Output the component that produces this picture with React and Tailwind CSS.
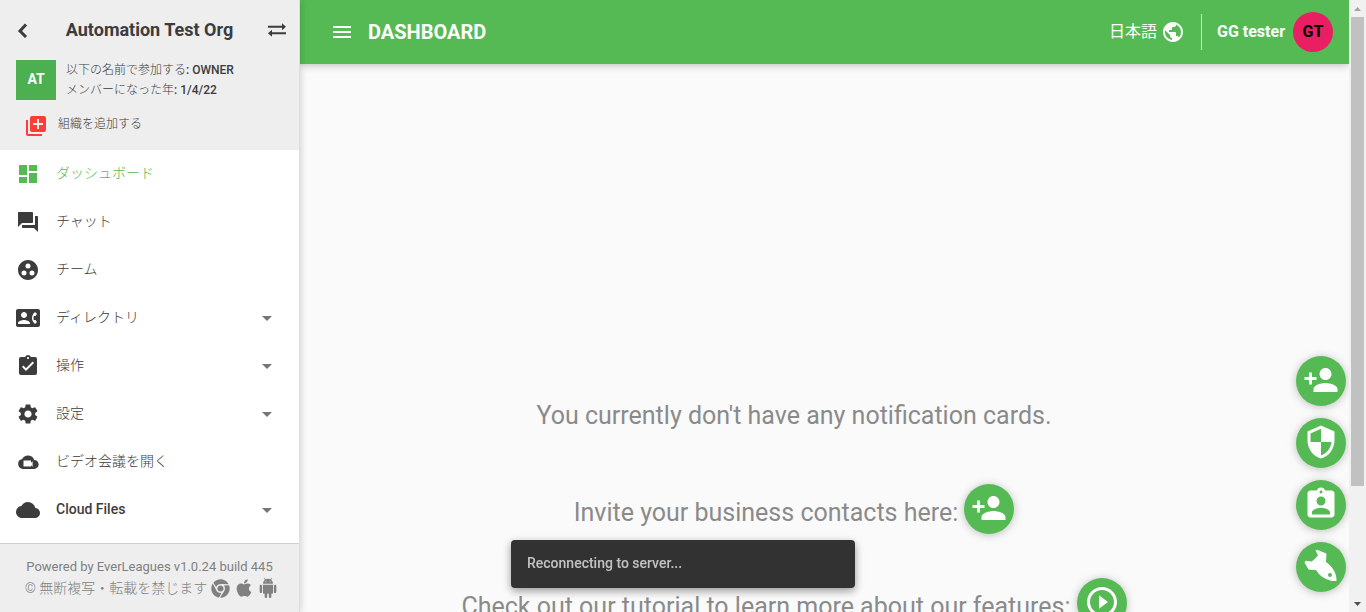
import {
  MdDashboard, MdForum, MdGroupWork, MdContactPhone, MdAssignmentTurnedIn, MdSettings, MdCloud,
  MdArrowDropDown, MdPublic, MdPersonAdd, MdSecurity, MdAssignmentInd, MdPlayCircleOutline, MdMenu, MdLibraryAdd,
} from "react-icons/md";
import { FaChrome, FaApple } from "react-icons/fa";

function SwapIcon() {
  return (
    <svg width="20" height="14" viewBox="0 0 20 14" fill="currentColor" aria-hidden="true">
      <path d="M1 2.800h14V.3l4 3.500-4 3.500V4.800H1z" />
      <path d="M19 9.300H5V6.800L1 10.300l4 3.500v-2.500h14z" />
    </svg>
  );
}

function BackIcon() {
  return (
    <svg width="12" height="16" viewBox="0 0 12 16" fill="none" stroke="currentColor" strokeWidth="3" aria-hidden="true">
      <path d="M10 2.500 4 9l6 6" />
    </svg>
  );
}

function VideoCloudIcon() {
  return (
    <svg width="24" height="24" viewBox="0 0 24 24" fill="currentColor" fillRule="evenodd" aria-hidden="true">
      <path d="M18.200 10A6.500 6.500 0 0 0 6.200 9 5 5 0 0 0 7 18.900h11.200a4.450 4.450 0 0 0 0-8.900zM7.500 10.500H15v2.300l1.600-1.600v5.600L15 15.200v1.300H7.500z" />
    </svg>
  );
}

function RobotIcon() {
  return (
    <svg className="ml-1" width="20" height="20" viewBox="0 0 24 24" fill="currentColor" aria-hidden="true">
      <path d="M6 18c0 .55.45 1 1 1h1v3.500c0 .83.67 1.500 1.500 1.500s1.500-.67 1.500-1.500V19h2v3.500c0 .83.67 1.500 1.500 1.500s1.500-.67 1.500-1.500V19h1c.55 0 1-.45 1-1V8H6v10zM3.500 8C2.670 8 2 8.670 2 9.500v7c0 .83.67 1.500 1.500 1.500S5 17.330 5 16.500v-7C5 8.670 4.330 8 3.500 8zm17 0c-.83 0-1.500.67-1.500 1.500v7c0 .83.67 1.500 1.500 1.500s1.500-.67 1.500-1.500v-7c0-.83-.67-1.500-1.500-1.500zm-4.970-5.840l1.300-1.300c.2-.2.2-.51 0-.71-.2-.2-.51-.2-.71 0l-1.480 1.480C13.850 1.230 12.950 1 12 1c-.96 0-1.860.23-2.660.63L7.850.15c-.2-.2-.51-.2-.71 0-.2.2-.2.51 0 .71l1.310 1.310C6.970 3.260 6 5.010 6 7h12c0-1.990-.97-3.750-2.470-4.840zM10 5H9V4h1v1zm5 0h-1V4h1v1z" />
    </svg>
  );
}

function RocketIcon() {
  return (
    <svg width="34" height="34" viewBox="0 0 34 34" fill="currentColor" fillRule="evenodd" aria-hidden="true">
      <path d="M11.500 1.500 13 .8l8.800 3.400q.7.300.6 1.200L22 13c6.500 4.500 11 11.500 10.500 19-7 .5-14-3-18-7.500L12 21l-6.500-.3Q4.500 20.700 4 19.500L.5 13.500l1.200-1.700 6 .7 3.300-2.700 3-3.300zM26 24a2 2 0 1 0 0 4 2 2 0 0 0 0-4z" />
    </svg>
  );
}

const menu = [
  { label: "ダッシュボード", Icon: MdDashboard, active: true },
  { label: "チャット", Icon: MdForum },
  { label: "チーム", Icon: MdGroupWork },
  { label: "ディレクトリ", Icon: MdContactPhone, expandable: true },
  { label: "操作", Icon: MdAssignmentTurnedIn, expandable: true },
  { label: "設定", Icon: MdSettings, expandable: true },
  { label: "ビデオ会議を開く", Icon: VideoCloudIcon },
  { label: "Cloud Files", Icon: MdCloud, expandable: true, latin: true },
];

function MenuItem({ label, Icon, active, expandable, latin }) {
  return (
    <li>
      <a href="#" aria-current={active ? "page" : undefined} className={`flex h-12 items-center pl-4 pr-5 ${active ? "text-[#55ba54]" : "text-[#3c3c3c]"}`}>
        <Icon size={24} />
        <span className={`ml-4 flex-1 pb-0.5 text-sm ${latin ? "font-medium" : "font-light"}`}>{label}</span>
        {expandable && <MdArrowDropDown size={24} className="text-[#757575]" />}
      </a>
    </li>
  );
}

function RoundButton({ label, children }) {
  return (
    <button type="button" aria-label={label} className="flex size-[50px] shrink-0 items-center justify-center rounded-full bg-[#55ba54] pb-0.5 text-white shadow-[0_1px_8px_rgba(0,0,0,0.25)]">
      {children}
    </button>
  );
}

function Sidebar() {
  return (
    <aside className="z-10 flex w-[300px] shrink-0 flex-col border-r border-[#dedede] bg-white text-[#3c3c3c] shadow-[0_0_8px_rgba(0,0,0,0.2)]">
      <header className="h-[150px] bg-[#eeeeee] pl-4">
        <div className="flex h-[60px] items-center justify-between pr-3">
          <button type="button" aria-label="Back"><BackIcon /></button>
          <h2 className="pl-1 text-lg font-bold">Automation Test Org</h2>
          <button type="button" aria-label="Switch"><SwapIcon /></button>
        </div>
        <div className="flex gap-2.5">
          <div className="flex size-10 items-center justify-center bg-[#4caf50] pb-0.5 text-sm font-bold text-white">AT</div>
          <div className="text-xs leading-5 font-light">
            <p>以下の名前で参加する<span className="font-medium">: OWNER</span></p>
            <p>メンバーになった年<span className="font-medium">: 1/4/22</span></p>
          </div>
        </div>
        <button type="button" className="mt-3.5 flex items-center gap-2.5 pl-2 text-xs font-light">
          <MdLibraryAdd size={24} className="text-[#ff3d37]" />
          <span className="pb-1">組織を追加する</span>
        </button>
      </header>
      <nav className="flex-1">
        <ul>{menu.map((item) => <MenuItem key={item.label} {...item} />)}</ul>
      </nav>
      <footer className="border-t border-[#cfcfcf] bg-[#eeeeee] pt-3 pb-3.5 text-center text-[#808080]">
        <p className="text-[13px] leading-[22px]">Powered by EverLeagues v1.0.24 build 445</p>
        <p className="flex items-center justify-center pl-1 text-sm leading-5">
          <span className="font-light">© 無断複写・転載を禁じます</span>
          <FaChrome size={19} className="ml-1" />
          <FaApple size={20} className="ml-1" />
          <RobotIcon />
        </p>
      </footer>
    </aside>
  );
}

function TopBar() {
  return (
    <header className="flex h-16 shrink-0 items-center bg-[#55ba54] pl-[30px] pr-4 text-white shadow-[0_1px_8px_rgba(0,0,0,0.25)]">
      <button type="button" aria-label="Menu"><MdMenu size={24} /></button>
      <h1 className="ml-3.5 flex-1 text-xl font-bold">DASHBOARD</h1>
      <button type="button" className="flex items-center gap-1 text-base">
        日本語 <MdPublic size={24} />
      </button>
      <div className="ml-4 h-9 border-l border-white/70" />
      <span className="ml-[15px] text-base font-bold">GG tester</span>
      <span className="ml-2 flex size-10 items-center justify-center rounded-full bg-[#e91e63] text-base font-bold text-black">GT</span>
    </header>
  );
}

function ScrollRail() {
  return (
    <div aria-hidden="true" className="flex w-[17px] shrink-0 flex-col items-center bg-[#f1f1f1]">
      <svg className="h-[17px] w-[17px] shrink-0 text-[#a3a3a3]" viewBox="0 0 17 17" fill="currentColor"><path d="M5 11l3.500-4 3.500 4z" /></svg>
      <div className="h-[469px] w-[13px] bg-[#c1c1c1]" />
      <svg className="mt-auto h-[17px] w-[17px] shrink-0 text-[#505050]" viewBox="0 0 17 17" fill="currentColor"><path d="M5 7l3.500 4 3.500-4z" /></svg>
    </div>
  );
}

export default function App() {
  return (
    <div className="flex h-screen overflow-hidden bg-[#fafafa] font-['Roboto','Noto_Sans_CJK_JP',sans-serif]">
      <Sidebar />
      <div className="flex min-w-0 flex-1 flex-col">
        <TopBar />
        <div className="flex min-h-0 flex-1">
          <main className="flex min-w-0 flex-1 flex-col items-center overflow-hidden pt-[336px] text-[25px] leading-8 text-[#8a8a8a]">
            <p>You currently don't have any notification cards.</p>
            <div className="mt-[52px] flex shrink-0 items-center gap-1.5">
              <p className="pt-2">Invite your business contacts here:</p>
              <RoundButton label="Invite contacts"><MdPersonAdd size={36} /></RoundButton>
            </div>
            <div className="mt-11 flex shrink-0 items-center gap-1.5">
              <p className="pt-2">Check out our tutorial to learn more about our features:</p>
              <RoundButton label="Play tutorial"><MdPlayCircleOutline size={36} /></RoundButton>
            </div>
          </main>
          <div className="flex w-[61px] shrink-0 flex-col items-end justify-end gap-3 pr-[3px] pb-5">
            <RoundButton label="Add contact"><MdPersonAdd size={36} /></RoundButton>
            <RoundButton label="Security"><MdSecurity size={36} /></RoundButton>
            <RoundButton label="Assignments"><MdAssignmentInd size={36} /></RoundButton>
            <RoundButton label="Quick start"><RocketIcon /></RoundButton>
          </div>
        </div>
      </div>
      <ScrollRail />
      <div role="status" className="fixed bottom-6 left-1/2 z-20 flex h-12 w-[344px] -translate-x-1/2 items-center rounded bg-[#323232] px-4 pb-0.5 text-sm font-medium text-white/70 shadow-[0_3px_8px_rgba(0,0,0,0.4)]">
        Reconnecting to server...
      </div>
    </div>
  );
}
